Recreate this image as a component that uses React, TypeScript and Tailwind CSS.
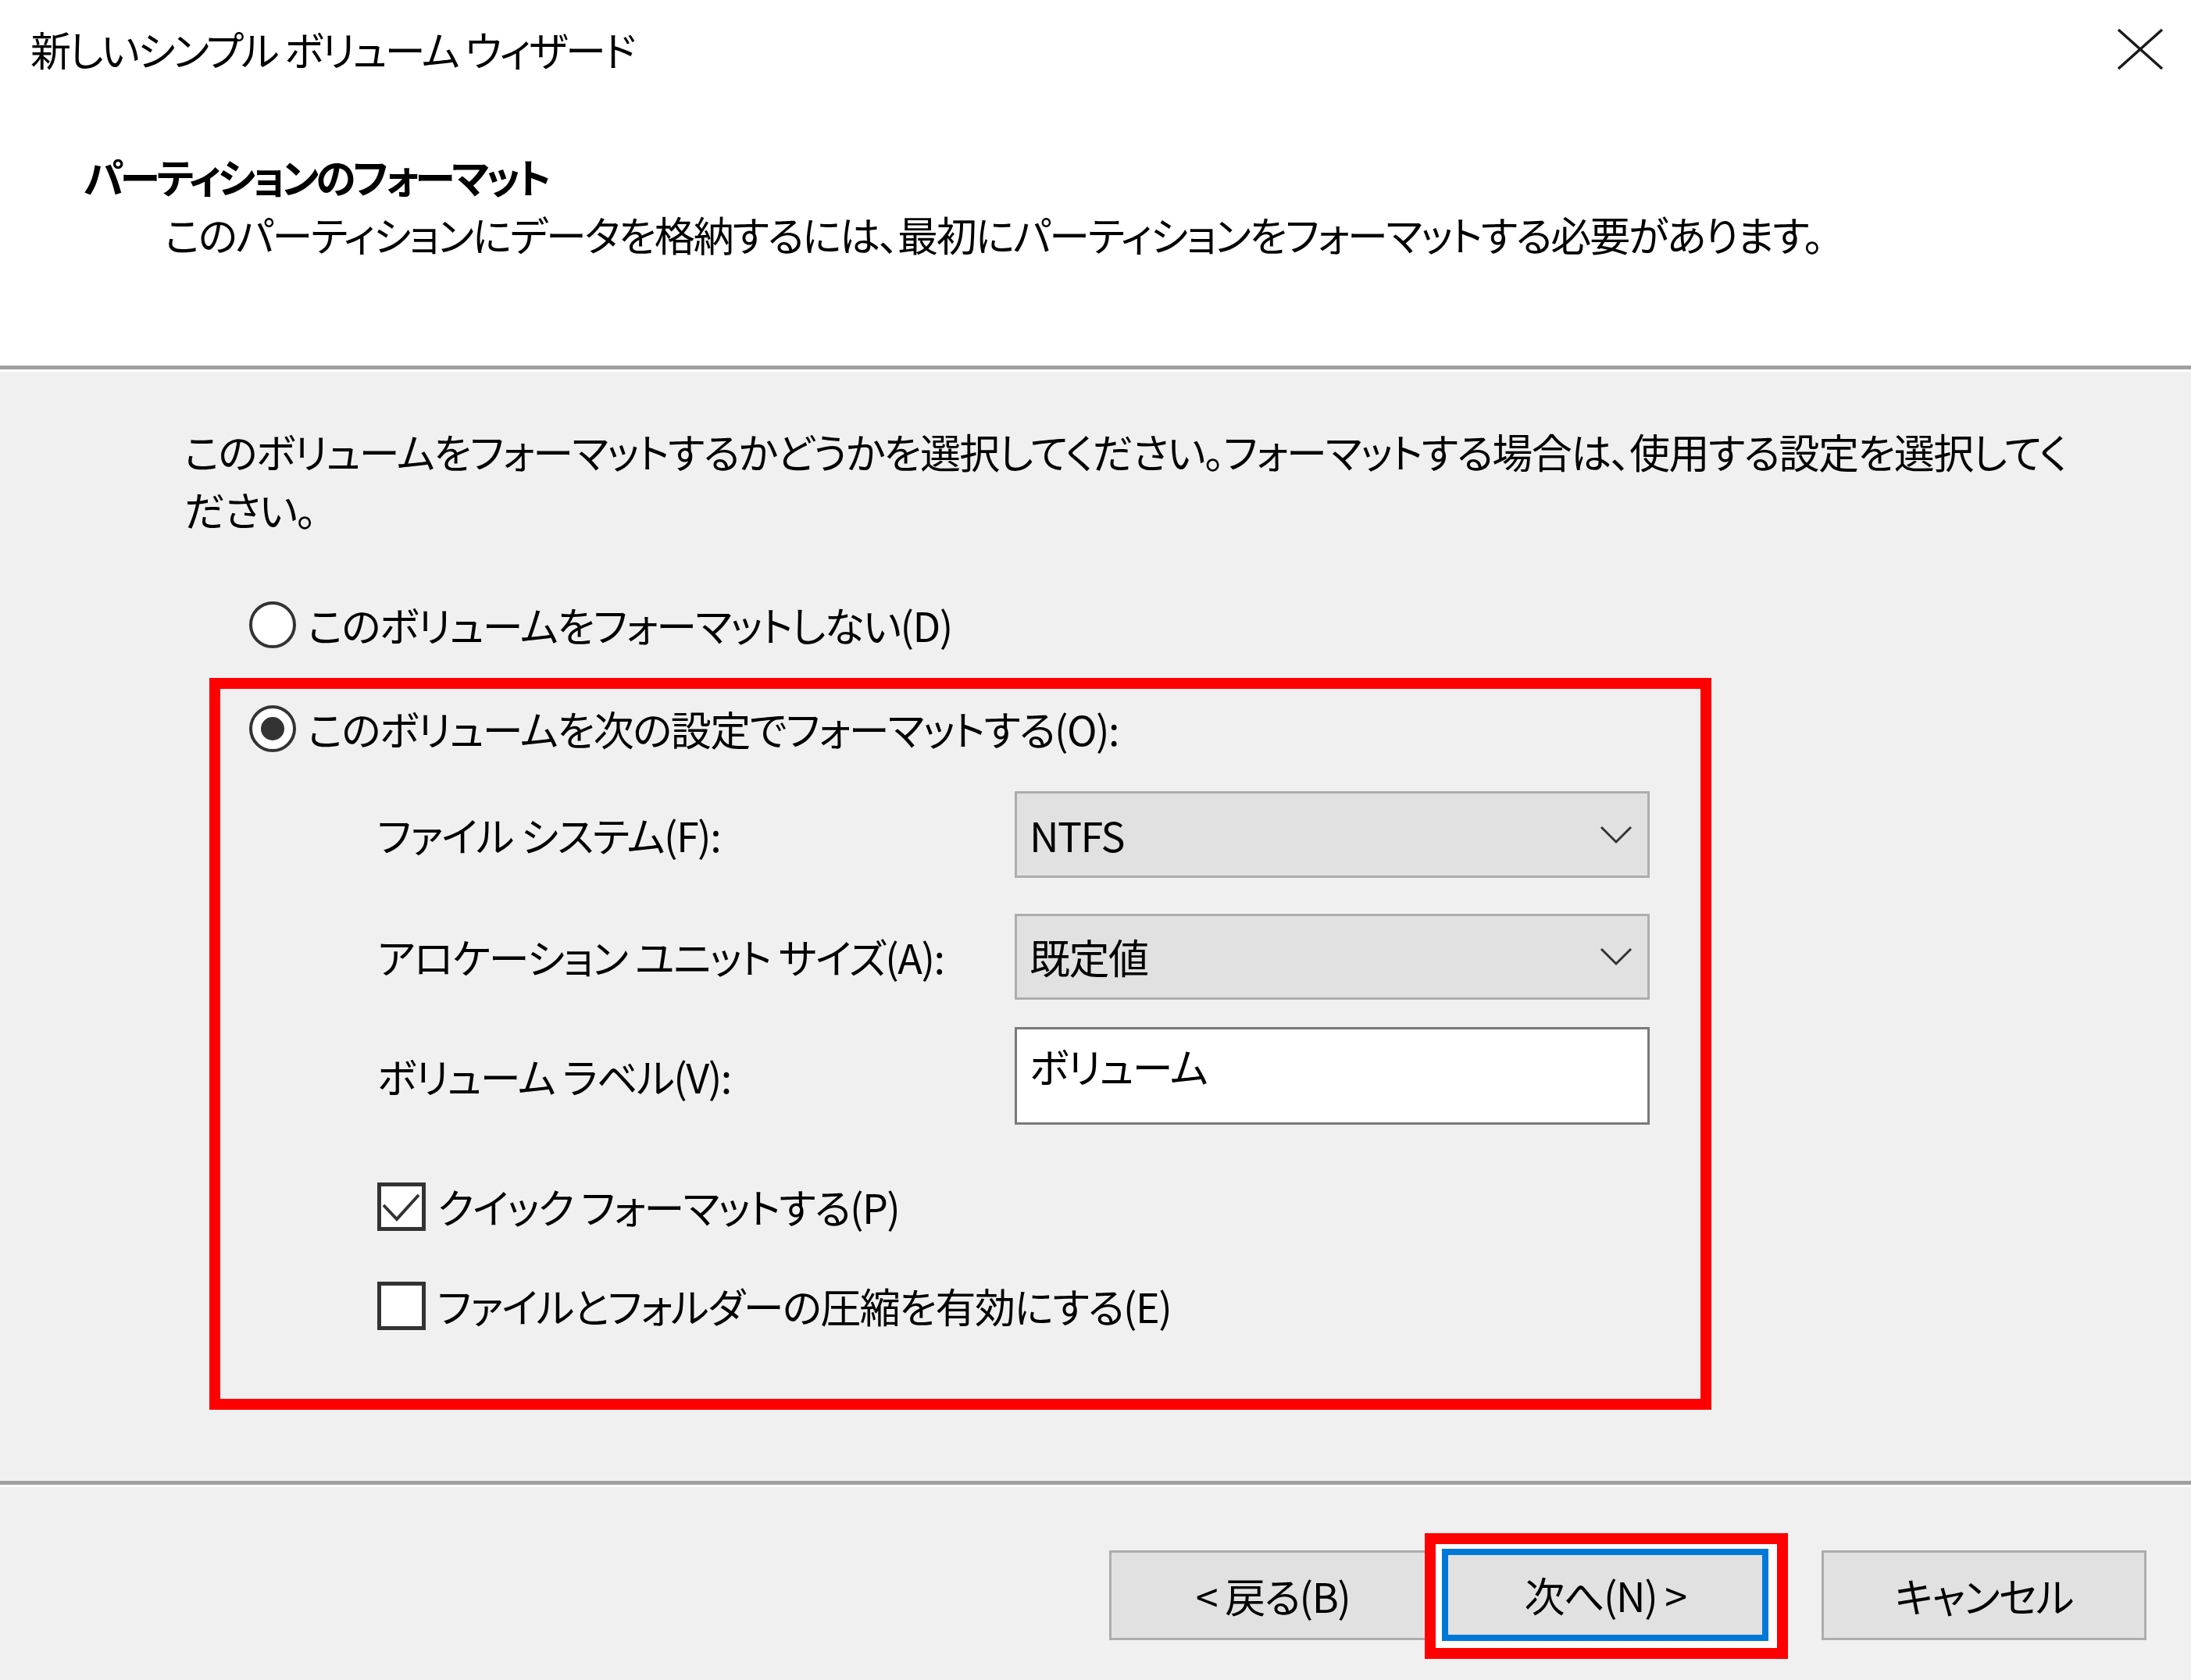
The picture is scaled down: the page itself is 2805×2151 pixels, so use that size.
import React from 'react'

function Radio({ checked }: { checked?: boolean }) {
  return (
    <span className="flex h-[60px] w-[60px] shrink-0 items-center justify-center rounded-full border-[4px] border-[#333333] bg-white">
      {checked && <span className="h-[30px] w-[30px] rounded-full bg-[#333333]" />}
    </span>
  )
}

function Checkbox({ checked }: { checked?: boolean }) {
  return (
    <span className="flex h-[62px] w-[62px] shrink-0 items-center justify-center border-[5px] border-[#333333] bg-white">
      {checked && (
        <svg viewBox="0 0 52 52" className="h-[52px] w-[52px]">
          <polyline points="3,24 20,42 48,11" fill="none" stroke="#333333" strokeWidth="4" />
        </svg>
      )}
    </span>
  )
}

function Combo({ value }: { value: string }) {
  return (
    <div className="flex h-full w-[813px] items-center justify-between border-[3px] border-[#adadad] bg-[#e1e1e1] pl-[16px] pr-[19px]">
      <span>{value}</span>
      <svg viewBox="0 0 42 24" className="h-[24px] w-[42px]">
        <polyline points="2,2 21,21 40,2" fill="none" stroke="#333333" strokeWidth="3" />
      </svg>
    </div>
  )
}

function Button({ children, className = '' }: { children: React.ReactNode; className?: string }) {
  return (
    <div className={`flex items-center justify-center bg-[#e1e1e1] ${className}`}>
      {children}
    </div>
  )
}

export default function App() {
  return (
    <div className="flex h-[2151px] w-[2805px] flex-col overflow-hidden bg-[#f0f0f0] font-['Noto_Sans_CJK_JP','Noto_Sans',sans-serif] text-[52px] leading-[74px] tracking-[-0.03em] text-black [font-feature-settings:'palt']">
      <header className="h-[468px] shrink-0 bg-white">
        <div className="flex h-[126px] items-center justify-between pl-[39px] pr-[35px]">
          <span className="tracking-[-0.05em]">新しいシンプル ボリューム ウィザード</span>
          <svg viewBox="0 0 60 54" className="h-[54px] w-[60px]">
            <line x1="2" y1="2" x2="58" y2="52" stroke="#1a1a1a" strokeWidth="3.5" />
            <line x1="58" y1="2" x2="2" y2="52" stroke="#1a1a1a" strokeWidth="3.5" />
          </svg>
        </div>
        <div className="mt-[63px] pl-[107px] font-bold tracking-[-0.08em]">パーティションのフォーマット</div>
        <div className="pl-[211px] tracking-[-0.04em]">
          このパーティションにデータを格納するには、最初にパーティションをフォーマットする必要があります。
        </div>
      </header>
      <div className="h-[5px] shrink-0 bg-[#a0a0a0]" />
      <div className="h-[3px] shrink-0 bg-white" />

      <main className="flex-1">
        <p className="mt-[65px] whitespace-nowrap pl-[236px]">
          このボリュームをフォーマットするかどうかを選択してください。フォーマットする場合は、使用する設定を選択してく
          <br />
          ださい。
        </p>

        <div className="mt-[74px] flex h-[74px] items-center gap-[15px] pl-[319px]">
          <Radio />
          <span>このボリュームをフォーマットしない(D)</span>
        </div>

        <section className="ml-[268px] mt-[31px] h-[937px] w-[1923px] border-[14px] border-[#ff0000]">
          <div className="mt-[14px] flex h-[74px] items-center gap-[15px] pl-[37px]">
            <Radio checked />
            <span>このボリュームを次の設定でフォーマットする(O):</span>
          </div>

          <div className="pl-[201px]">
            <div className="mt-[43px] flex h-[111px] items-center">
              <span className="w-[816px] shrink-0">ファイル システム(F):</span>
              <Combo value="NTFS" />
            </div>
            <div className="mt-[46px] flex h-[110px] items-center">
              <span className="w-[816px] shrink-0">アロケーション ユニット サイズ(A):</span>
              <Combo value="既定値" />
            </div>
            <div className="mt-[35px] flex h-[125px] items-center">
              <span className="w-[816px] shrink-0">ボリューム ラベル(V):</span>
              <div className="h-full w-[813px] border-[3px] border-[#7a7a7a] bg-white pl-[16px] pt-[10px]">
                ボリューム
              </div>
            </div>
            <div className="mt-[73px] flex h-[64px] items-center gap-[15px]">
              <Checkbox checked />
              <span>クイック フォーマットする(P)</span>
            </div>
            <div className="mt-[63px] flex h-[64px] items-center gap-[15px]">
              <Checkbox />
              <span>ファイルとフォルダーの圧縮を有効にする(E)</span>
            </div>
          </div>
        </section>
      </main>

      <div className="h-[5px] shrink-0 bg-[#a0a0a0]" />
      <div className="h-[3px] shrink-0 bg-white" />

      <footer className="flex h-[247px] shrink-0 items-start justify-end pr-[57px] pt-[59px]">
        <Button className="mt-[22px] h-[115px] w-[404px] border-[3px] border-r-0 border-[#adadad] pl-[12px]">
          &lt; 戻る(B)
        </Button>
        <div className="border-[14px] border-[#ff0000] bg-white pb-[9px] pl-[8px] pr-[11px] pt-[6px]">
          <Button className="h-[118px] w-[418px] border-[8px] border-[#0078d7]">次へ(N) &gt;</Button>
        </div>
        <Button className="ml-[43px] mt-[22px] h-[115px] w-[416px] border-[3px] border-[#adadad]">
          キャンセル
        </Button>
      </footer>
    </div>
  )
}
